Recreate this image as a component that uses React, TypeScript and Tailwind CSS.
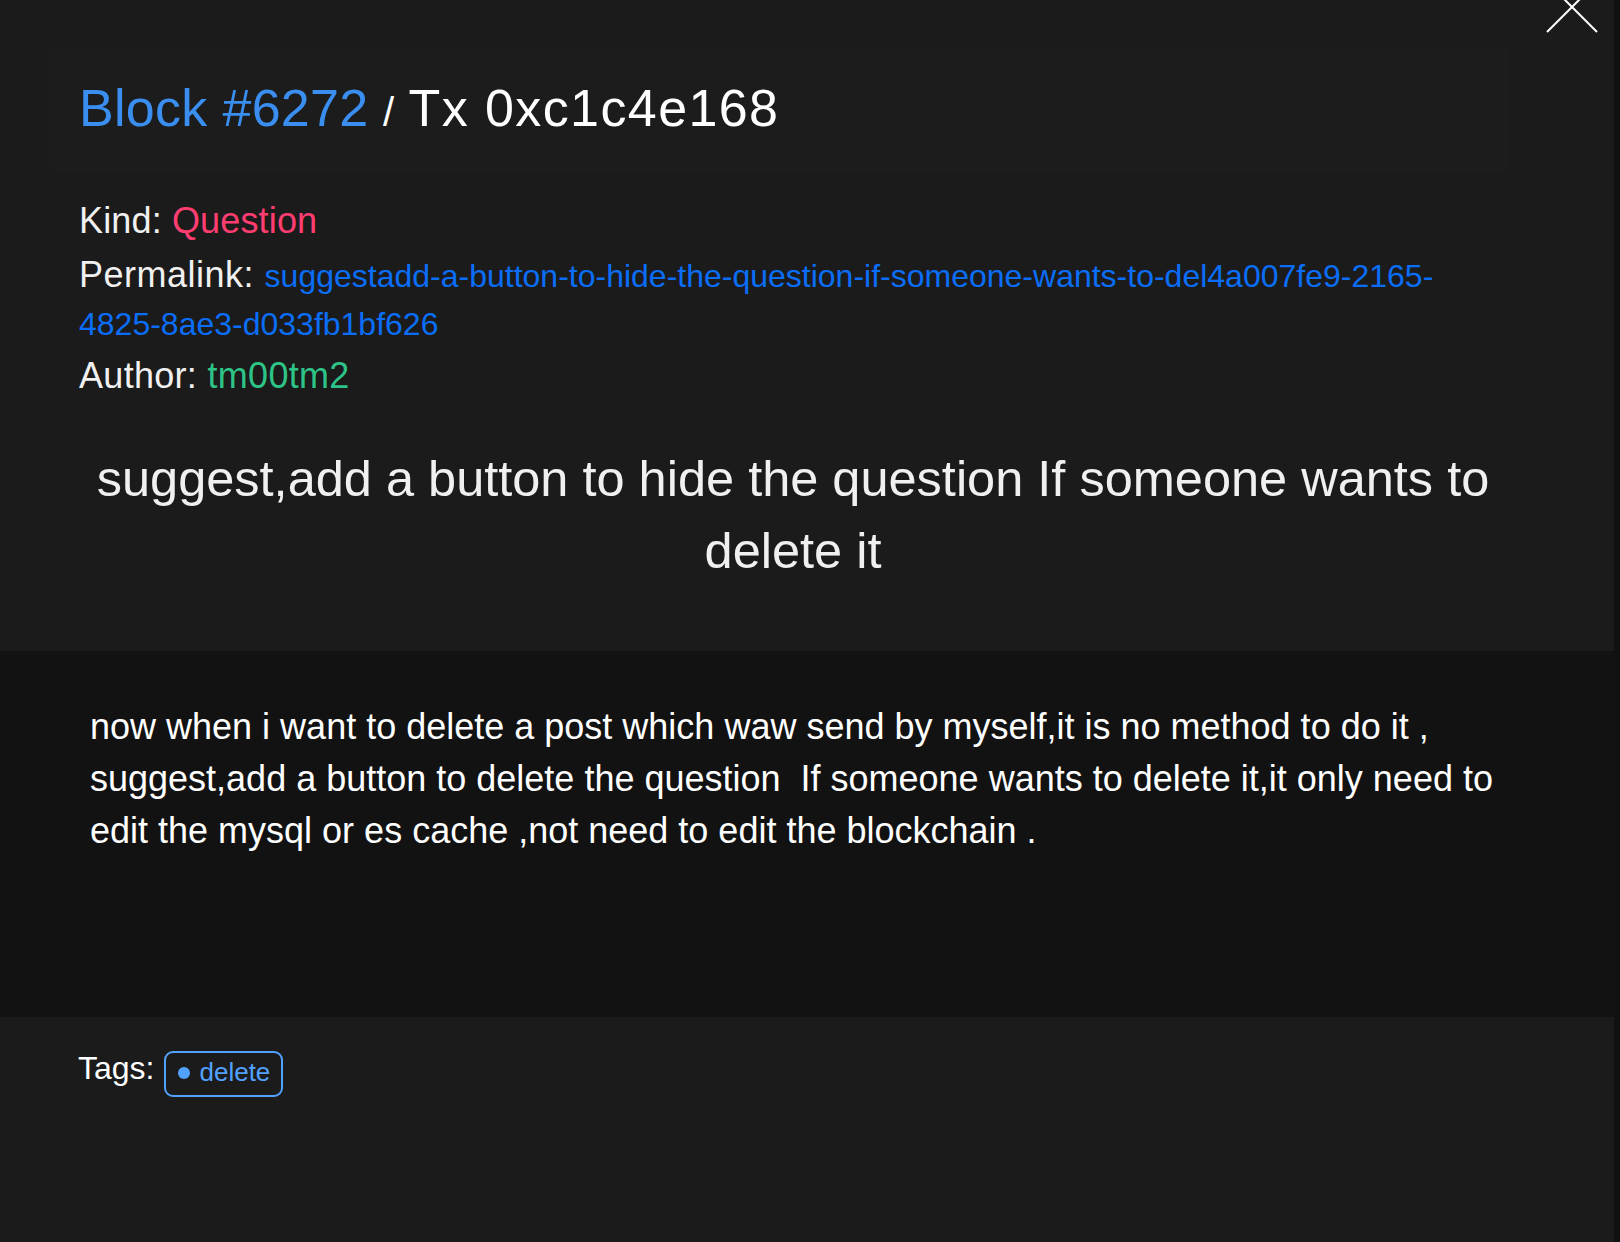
import React from 'react';

type TxDetail = {
  block: number;
  hash: string;
  kind: string;
  permalinkHead: string;
  permalinkTail: string;
  author: string;
  title: string;
  body: string;
  tags: string[];
};

const tx: TxDetail = {
  block: 6272,
  hash: '0xc1c4e168',
  kind: 'Question',
  permalinkHead: 'suggestadd-a-button-to-hide-the-question-if-someone-wants-to-del4a007fe9-2165-',
  permalinkTail: '4825-8ae3-d033fb1bf626',
  author: 'tm00tm2',
  title: 'suggest,add a button to hide the question If someone wants to delete it',
  body:
    'now when i want to delete a post which waw send by myself,it is no method to do it , suggest,add a button to delete the question  If someone wants to delete it,it only need to edit the mysql or es cache ,not need to edit the blockchain .',
  tags: ['delete'],
};

const CloseIcon = () => (
  <svg
    className="absolute left-[1546px] top-[-19px] h-[52px] w-[52px]"
    viewBox="0 0 52 52"
    fill="none"
    stroke="#ffffff"
    strokeWidth={2}
  >
    <line x1="1" y1="1" x2="51" y2="51" />
    <line x1="51" y1="1" x2="1" y2="51" />
  </svg>
);

const Tag = ({ label }: { label: string }) => (
  <span className="flex h-[46px] items-center gap-[9px] rounded-[9px] border-2 border-blue-400 pb-[5px] pl-[12px] pr-[11px] text-[26px] leading-[30px] text-blue-400">
    <span className="mt-[3px] h-[12px] w-[12px] rounded-full bg-blue-400" />
    {label}
  </span>
);

export default function App() {
  return (
    <div className="flex min-h-screen bg-[#111111] font-['Liberation_Sans',Arial,sans-serif]">
      <div className="relative w-[1614px] shrink-0 overflow-hidden bg-[#1b1b1b]">
        <CloseIcon />

        <section className="pb-[63.5px] pt-[47px]">
          <div className="ml-[49px] h-[125px] w-[1459px] bg-[#1c1c1c] pl-[30px] pt-[31px]">
            <h1 className="whitespace-nowrap text-[52px] leading-[60px]">
              <span className="tracking-[0.3px] text-[#3a8ef0]">Block #{tx.block}</span>{' '}
              <span className="text-[40px] text-white">/</span>{' '}
              <span className="tracking-[1.4px] text-white">Tx {tx.hash}</span>
            </h1>
          </div>

          <div className="ml-[79px] mt-[25px] flex w-[1390px] flex-col gap-[5.5px] text-[36px] leading-[48px] text-[#f0f0f0]">
            <p className="tracking-[0.15px]">
              Kind: <span className="text-[#ff3d71]">{tx.kind}</span>
            </p>
            <p className="tracking-[0.5px]">
              Permalink:{' '}
              <a className="text-[32px] leading-[44px] tracking-normal text-[#0b6ef9]">
                {tx.permalinkHead}
                <wbr />
                {tx.permalinkTail}
              </a>
            </p>
            <p className="tracking-[0.3px]">
              Author: <span className="text-[#2ec488]">{tx.author}</span>
            </p>
          </div>

          <h2 className="ml-[77px] mt-[43px] w-[1432px] text-center text-[50.5px] leading-[72px] text-[#f0f0f0]">
            {tx.title}
          </h2>
        </section>

        <section className="h-[366px] bg-[#121212] pl-[90px] pr-[112px] pt-[50px]">
          <p className="whitespace-pre-wrap text-[36px] leading-[52px] text-white">{tx.body}</p>
        </section>

        <section className="flex items-baseline pl-[78px] pt-[34.7px]">
          <span className="mr-[10px] text-[32px] leading-[34px] text-white">Tags:</span>
          {tx.tags.map((t) => (
            <Tag key={t} label={t} />
          ))}
        </section>
      </div>
    </div>
  );
}
